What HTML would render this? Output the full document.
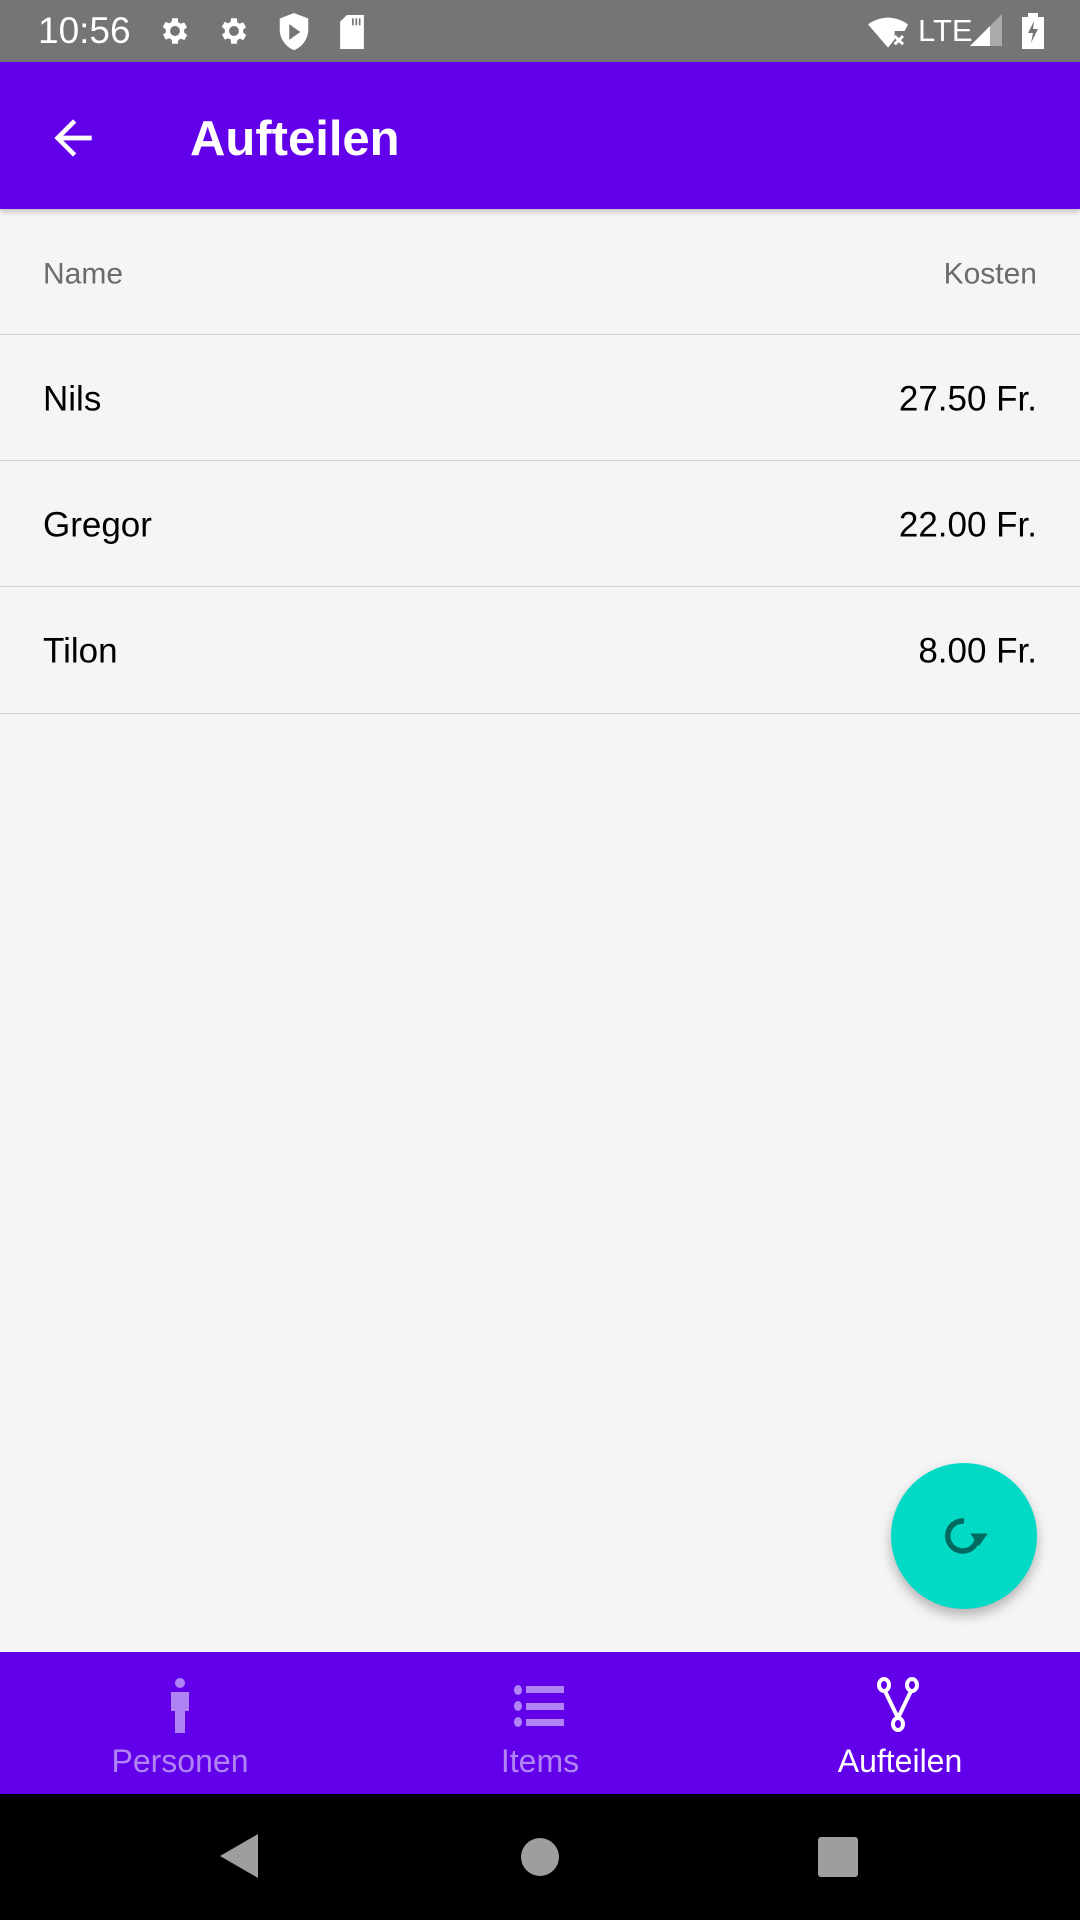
<!DOCTYPE html>
<html><head><meta charset="utf-8"><style>
*{margin:0;padding:0;box-sizing:border-box}
body{width:1080px;height:1920px;background:#f5f5f5;font-family:"Liberation Sans",sans-serif;position:relative;overflow:hidden}
.abs{position:absolute}
.sb{top:0;left:0;width:1080px;height:62px;background:#757575;color:#fff}
.ab{top:62px;left:0;width:1080px;height:147px;background:#6200ea;box-shadow:0 3px 5px rgba(0,0,0,.2)}
.row{position:absolute;left:0;width:1080px;border-bottom:1.5px solid #d6d6d6}
.row span{position:absolute;top:50%;transform:translateY(-46%);font-size:35px;color:#000}
.row .l{left:43px}.row .r{right:43px}
.hdr span{font-size:30px;color:#6b6b6b}
.bn{top:1652px;left:0;width:1080px;height:142px;background:#6200ea}
.lab{position:absolute;top:1743px;font-size:32px;width:360px;text-align:center}
.nav{top:1794px;left:0;width:1080px;height:126px;background:#000}
</style></head><body>
<div class="abs sb">
 <div class="abs" style="left:38px;top:10px;font-size:37px;">10:56</div>
 <svg class="abs" style="left:158px;top:14px" width="34" height="34" viewBox="0 0 24 24"><path fill="#fff" d="M19.4 13a7.5 7.5 0 000-2l2.1-1.6-2-3.5-2.5 1a7 7 0 00-1.7-1L15 3h-4l-.4 2.6a7 7 0 00-1.7 1l-2.5-1-2 3.5L6.6 11a7.5 7.5 0 000 2l-2.1 1.6 2 3.5 2.5-1a7 7 0 001.7 1L11 21h4l.4-2.6a7 7 0 001.7-1l2.5 1 2-3.5zM13 15.5a3.5 3.5 0 110-7 3.5 3.5 0 010 7z" transform="translate(-1 0)"/></svg>
 <svg class="abs" style="left:217px;top:14px" width="34" height="34" viewBox="0 0 24 24"><path fill="#fff" d="M19.4 13a7.5 7.5 0 000-2l2.1-1.6-2-3.5-2.5 1a7 7 0 00-1.7-1L15 3h-4l-.4 2.6a7 7 0 00-1.7 1l-2.5-1-2 3.5L6.6 11a7.5 7.5 0 000 2l-2.1 1.6 2 3.5 2.5-1a7 7 0 001.7 1L11 21h4l.4-2.6a7 7 0 001.7-1l2.5 1 2-3.5zM13 15.5a3.5 3.5 0 110-7 3.5 3.5 0 010 7z" transform="translate(-1 0)"/></svg>
 <svg class="abs" style="left:278px;top:13px" width="32" height="38" viewBox="0 0 20 24"><path fill="#fff" d="M10 0L1 3.5v7c0 6 4 11 9 13 5-2 9-7 9-13v-7z"/><path fill="#757575" d="M7 7l7 5-7 5z"/></svg>
 <svg class="abs" style="left:337px;top:15px" width="30" height="34" viewBox="0 0 16 20"><path fill="#fff" d="M5 0h10v20H1V4z"/><path fill="#757575" d="M8 2h1v4H8zM10 2h1v4h-1zM12 2h1v4h-1z"/></svg>
 <svg class="abs" style="left:868px;top:14px" width="40" height="34" viewBox="0 0 24 20"><path fill="#fff" d="M12 2C7 2 3 4 0 6l12 14 4-5v-5h6l2-4C21 4 17 2 12 2z"/><path stroke="#fff" stroke-width="1.8" d="M16 13l5 5M21 13l-5 5"/></svg>
 <div class="abs" style="left:918px;top:13px;font-size:31px;">LTE</div>
 <svg class="abs" style="left:970px;top:14px" width="32" height="32"><path fill="#fff" d="M0 32L20 12V32z"/><path fill="#aaa" d="M20 12L32 0V32H20z"/></svg>
 <svg class="abs" style="left:1022px;top:13px" width="22" height="36" viewBox="0 0 11 18"><path fill="#fff" d="M3 0h5v2h3v16H0V2h3z"/><path fill="#757575" d="M6 4L3 10h2.5L4.5 15 8 8H5.5z"/></svg>
</div>
<div class="abs ab">
 <svg class="abs" style="left:45px;top:48px" width="56" height="56" viewBox="0 0 24 24"><path fill="#fff" d="M20 11H7.8l5.6-5.6L12 4l-8 8 8 8 1.4-1.4L7.8 13H20z"/></svg>
 <div class="abs" style="left:190px;top:49px;font-size:49px;font-weight:bold;color:#fff">Aufteilen</div>
</div>
<div class="row hdr" style="top:211px;height:124px"><span class="l">Name</span><span class="r">Kosten</span></div>
<div class="row" style="top:335px;height:126px"><span class="l">Nils</span><span class="r">27.50 Fr.</span></div>
<div class="row" style="top:461px;height:126px"><span class="l">Gregor</span><span class="r">22.00 Fr.</span></div>
<div class="row" style="top:587px;height:127px"><span class="l">Tilon</span><span class="r">8.00 Fr.</span></div>
<div class="abs" style="left:891px;top:1463px;width:146px;height:146px;border-radius:50%;background:#03dac5;box-shadow:0 6px 12px rgba(0,0,0,.28)">
 <svg class="abs" style="left:43px;top:43px" width="60" height="60" viewBox="0 0 24 24"><path fill="none" stroke="#006a5e" stroke-width="2.2" d="M17.5 12A6 6 0 1 1 12 6"/><path fill="#006a5e" d="M14.5 11h7l-3.5 5z"/></svg>
</div>
<div class="abs bn">
 <svg class="abs" style="left:168px;top:25px" width="24" height="56" viewBox="0 0 24 56"><circle cx="12" cy="6" r="5" fill="#b084f4"/><path fill="#b084f4" d="M3 15h18v19h-4v22H7V34H3z"/></svg>
 <svg class="abs" style="left:514px;top:32px" width="50" height="44" viewBox="0 0 50 44"><g fill="#b084f4"><ellipse cx="4" cy="6" rx="4" ry="5"/><ellipse cx="4" cy="22" rx="4" ry="5"/><ellipse cx="4" cy="38" rx="4" ry="5"/><rect x="12" y="2" width="38" height="7"/><rect x="12" y="19" width="38" height="7"/><rect x="12" y="35" width="38" height="7"/></g></svg>
 <svg class="abs" style="left:875px;top:25px" width="50" height="56" viewBox="0 0 50 56"><g fill="none" stroke="#fff" stroke-width="4"><ellipse cx="9" cy="8" rx="5" ry="6"/><ellipse cx="37" cy="8" rx="5" ry="6"/><ellipse cx="23" cy="47" rx="5" ry="6"/><path d="M10 14l13 27M36 14L23 41"/></g></svg>
</div>
<div class="lab" style="left:0;color:#b084f4">Personen</div>
<div class="lab" style="left:360px;color:#b084f4">Items</div>
<div class="lab" style="left:720px;color:#fff">Aufteilen</div>
<div class="abs nav">
 <svg class="abs" style="left:218px;top:38px" width="42" height="48"><path fill="#9e9e9e" d="M40 2V46L2 24z"/></svg>
 <div class="abs" style="left:521px;top:44px;width:38px;height:38px;border-radius:50%;background:#9e9e9e"></div>
 <div class="abs" style="left:818px;top:43px;width:40px;height:40px;border-radius:3px;background:#9e9e9e"></div>
</div>
</body></html>
